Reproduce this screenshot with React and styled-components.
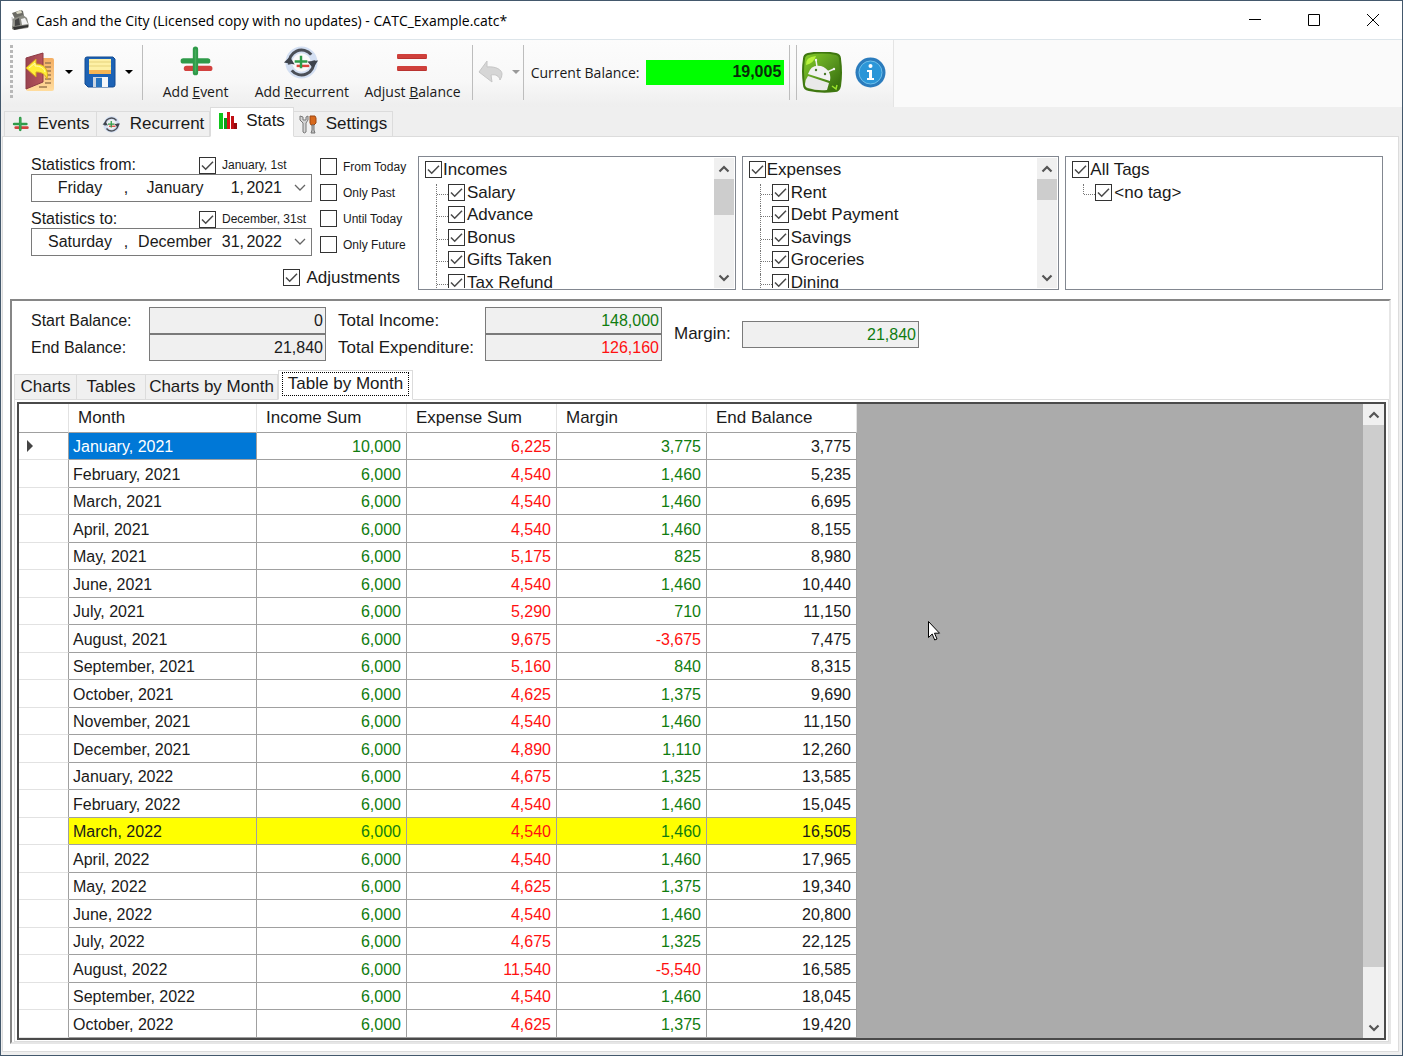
import React, { useState } from "react";
import styled, { createGlobalStyle } from "styled-components";

const GlobalStyle = createGlobalStyle`
  * {
    box-sizing: border-box;
  }
  body {
    margin: 0;
    font-family: "Liberation Sans", Arial, sans-serif;
    font-size: 16px;
    color: #1a1a1a;
    background: #fff;
  }
  button, input {
    font: inherit;
    color: inherit;
  }
  button {
    padding: 0;
    border: 0;
    background: none;
  }
`;

const Window = styled.div`
  display: flex;
  flex-direction: column;
  height: 100vh;
  overflow: hidden;
  border: 1px solid #43586c;
  background: #efefef;
`;

/* title bar */
const TitleBar = styled.header`
  display: flex;
  align-items: center;
  height: 38px;
  padding-left: 9px;
  background: #fff;
`;
const Title = styled.h1`
  flex: 1;
  margin: 0 0 0 6px;
  font-family: "Open Sans", "Noto Sans", sans-serif;
  font-size: 14px;
  font-weight: 400;
  color: #000;
`;
const WindowButton = styled.button`
  display: flex;
  align-items: center;
  justify-content: center;
  width: 59px;
  height: 38px;
`;

/* toolbar */
const ToolbarRow = styled.div`
  display: flex;
  height: 68px;
  border-top: 1px solid #dde5ea;
  background: #fafafa;
`;
const Toolbar = styled.div`
  display: flex;
  align-items: center;
  height: 67px;
  width: 893px;
  padding: 0 0 3px 9px;
  background: linear-gradient(#fcfcfc, #f8f8f8 60%, #eee);
  border-right: 1px solid #e4e4e4;
  font-family: "Open Sans", "Noto Sans", sans-serif;
  font-size: 14px;
`;
const Grip = styled.div`
  width: 3px;
  height: 54px;
  margin-right: 12px;
  background: repeating-linear-gradient(#b8b8b8 0 3px, transparent 3px 5px);
`;
const Separator = styled.div`
  width: 1px;
  height: 55px;
  background: #bdbdbd;
`;
const IconButton = styled.button`
  display: flex;
  align-items: center;
  justify-content: center;
  width: ${(props) => props.$width}px;
  height: 54px;
`;
const Caret = styled.span`
  border: 4px solid transparent;
  border-top-color: ${(props) => props.$color || "#000"};
  border-bottom-width: 0;
`;
const ToolButton = styled.button`
  display: flex;
  flex-direction: column;
  align-items: center;
  width: ${(props) => props.$width}px;
  padding-top: 4px;
  white-space: nowrap;
`;
const ToolIcon = styled.span`
  display: flex;
  align-items: center;
  justify-content: center;
  height: 36px;
`;
const ToolLabel = styled.span`
  line-height: 24px;
`;
const BalanceLabel = styled.label`
  width: 123px;
  padding-left: 7px;
  white-space: nowrap;
`;
const BalanceInput = styled.input`
  width: 138px;
  height: 25px;
  margin-right: 5px;
  padding: 0 3px;
  border: 0;
  background: #00ff00;
  color: #0a2a0a;
  font-family: "Liberation Sans", Arial, sans-serif;
  font-size: 16px;
  font-weight: 700;
  text-align: right;
`;

/* tabs */
const TabBar = styled.div`
  display: flex;
  align-items: flex-end;
  height: ${(props) => props.$height}px;
  padding-left: ${(props) => props.$indent}px;
  flex: none;
`;
const Tab = styled.button`
  display: flex;
  align-items: center;
  justify-content: center;
  gap: 9px;
  width: ${(props) => props.$width}px;
  height: ${(props) => (props.$active ? 30 : 26)}px;
  padding-bottom: ${(props) => (props.$active ? 2 : 0)}px;
  margin-bottom: -1px;
  border: 1px solid #dcdcdc;
  border-left-width: ${(props) => (props.$first || props.$active ? 1 : 0)}px;
  border-bottom-color: ${(props) => (props.$active ? "#fff" : "#dcdcdc")};
  background: ${(props) => (props.$active ? "#fff" : "#f0f0f0")};
  position: relative;
  font-size: 17px;
  white-space: nowrap;
`;
const FocusRing = styled.span`
  padding: 1px 5px;
  outline: 1px dotted #000;
  line-height: 20px;
`;

const Page = styled.main`
  flex: 1;
  display: flex;
  flex-direction: column;
  min-height: 0;
  margin: 0 3px 3px 1px;
  border: 1px solid #dcdcdc;
  background: #fff;
`;

/* filters */
const Filters = styled.section`
  display: flex;
  padding: 19px 15px 9px 28px;
  flex: none;
`;
const FilterColumn = styled.div`
  width: 387px;
`;
const DateRows = styled.div`
  display: flex;
  gap: 8px;
`;
const DateColumn = styled.div`
  width: 281px;
`;
const DateHeader = styled.div`
  display: flex;
  align-items: center;
  height: 18px;
  margin-top: ${(props) => (props.$spaced ? 8 : 0)}px;
`;
const DateTitle = styled.span`
  width: 168px;
`;
const CheckLabel = styled.label`
  display: flex;
  align-items: center;
  gap: ${(props) => props.$gap || 6}px;
  font-size: ${(props) => (props.$small ? 12 : 17)}px;
  height: 17px;
  white-space: nowrap;
`;
const CheckInput = styled.input.attrs({ type: "checkbox" })`
  appearance: none;
  flex: none;
  width: 17px;
  height: 17px;
  margin: 0;
  border: 1px solid #333;
  background: #fff;
  &:checked {
    background: #fff
      url("data:image/svg+xml,%3Csvg xmlns='http://www.w3.org/2000/svg' viewBox='0 0 15 15'%3E%3Cpath d='M2 7.5l3.7 3.7 7.3-7.4' fill='none' stroke='%23484848' stroke-width='1.5'/%3E%3C/svg%3E");
  }
`;
const DateBox = styled.button`
  display: grid;
  grid-template-columns: 80px 12px 86px 26px 38px 1fr;
  align-items: center;
  width: 100%;
  height: 28px;
  padding-left: 8px;
  border: 1px solid #7a7a7a;
  background: #fff;
  text-align: center;
  white-space: nowrap;
`;
const DatePart = styled.span`
  text-align: right;
`;
const ChevronCell = styled.span`
  display: flex;
  justify-content: flex-end;
  padding-right: 5px;
`;
const AdjustmentsRow = styled.div`
  display: flex;
  justify-content: flex-end;
  width: 369px;
  margin-top: 13px;
`;
const QuickColumn = styled.div`
  display: flex;
  flex-direction: column;
  gap: 9px;
  padding-top: 2px;
`;
const TreeGrid = styled.div`
  flex: 1;
  display: grid;
  grid-template-columns: repeat(3, 1fr);
  gap: 6px;
`;
const TreeBox = styled.div`
  display: flex;
  height: 134px;
  padding: 1px;
  border: 1px solid #828790;
  background: #fff;
`;
const TreeBody = styled.div`
  flex: 1;
  padding: 3px 0 0 5px;
  overflow: hidden;
`;
const TreeList = styled.ul`
  margin: 6px 0 0 11px;
  padding: 0;
  list-style: none;
`;
const TreeNode = styled.li`
  display: flex;
  align-items: flex-start;
  height: 22px;
  border-left: 1px dotted #777;
  &:nth-child(even) {
    height: 23px;
  }
  &:last-child {
    height: ${(props) => (props.$open ? 22 : 10)}px;
  }
  &::before {
    content: "";
    width: 11px;
    height: 10px;
    border-bottom: 1px dotted #777;
  }
`;

/* scrollbars */
const ScrollTrack = styled.div`
  display: flex;
  flex-direction: column;
  width: ${(props) => props.$width || 20}px;
  background: #f0f0f0;
`;
const ScrollButton = styled.button`
  display: flex;
  align-items: center;
  justify-content: center;
  height: 21px;
  flex: none;
`;
const ScrollThumb = styled.div`
  flex: ${(props) => props.$size} 0 0px;
  background: #cdcdcd;
`;
const ScrollRest = styled.div`
  flex: ${(props) => props.$size} 0 0px;
`;

/* lower panel */
const Report = styled.section`
  flex: 1;
  display: flex;
  flex-direction: column;
  min-height: 0;
  margin: 0 7px 7px 7px;
  border: 2px solid #e6e6e6;
  border-top-color: #868686;
  border-left-color: #868686;
`;
const Summary = styled.div`
  display: grid;
  grid-template-columns: 118px 177px 159px 177px 80px 177px;
  grid-template-rows: 27px 27px;
  align-items: center;
  padding: 6px 0 0 19px;
`;
const SummaryLabel = styled.label`
  grid-column: ${(props) => props.$col};
  grid-row: ${(props) => props.$row};
  padding-left: ${(props) => (props.$col > 1 ? 12 : 0)}px;
  font-size: ${(props) => (props.$col > 1 ? 17 : 16)}px;
`;
const SummaryInput = styled.input`
  grid-column: ${(props) => props.$col};
  grid-row: ${(props) => props.$row};
  width: 177px;
  height: 27px;
  padding: 1px 2px 0;
  border: 1px solid #7a7a7a;
  border-radius: 0;
  background: #f0f0f0;
  color: ${(props) => props.$color || "#1a1a1a"};
  text-align: right;
`;
const TabPanel = styled.div`
  flex: 1;
  display: flex;
  min-height: 0;
  margin-left: 2px;
  padding: 2px 2px 1px;
  border: 1px solid #dcdcdc;
`;
const GridFrame = styled.div`
  flex: 1;
  display: flex;
  min-width: 0;
  border: 2px solid #4a4a4a;
`;
const GridArea = styled.div`
  position: relative;
  flex: 1;
  overflow: hidden;
  background: #ababab;
`;
const Pointer = styled.svg`
  position: absolute;
  left: 909px;
  top: 217px;
`;
const Table = styled.table`
  table-layout: fixed;
  width: 838px;
  border-collapse: separate;
  border-spacing: 0;
  background: #fff;
`;
const Col = styled.col`
  width: ${(props) => props.$width}px;
`;
const HeadCell = styled.th`
  height: 29px;
  padding: 0 9px;
  border-right: 1px solid #e2e2e2;
  border-bottom: 1px solid #a0a0a0;
  font-size: 17px;
  font-weight: 400;
  text-align: left;
`;
const Row = styled.tr`
  height: 27px;
  background: ${(props) => (props.$current ? "#ffff00" : "#fff")};
  &:nth-child(even) {
    height: 28px;
  }
`;
const RowHeader = styled.td`
  padding: 0 0 0 8px;
  border-right: 1px solid #a0a0a0;
  border-bottom: 1px solid #e2e2e2;
  background: #fff;
`;
const Marker = styled.span`
  display: block;
  width: 0;
  border: 6px solid transparent;
  border-left-color: #444;
  border-right-width: 0;
`;
const Cell = styled.td`
  padding: 2px 5px 0 4px;
  border-right: 1px solid #a0a0a0;
  border-bottom: 1px solid #a0a0a0;
  background: ${(props) => (props.$selected ? "#0078d7" : "transparent")};
  color: ${(props) => props.$color || "#1a1a1a"};
  text-align: ${(props) => (props.$number ? "right" : "left")};
`;

const GREEN = "#107c10";
const RED = "#ff1010";

const months = [
  ["January, 2021", "10,000", "6,225", "3,775", "3,775"],
  ["February, 2021", "6,000", "4,540", "1,460", "5,235"],
  ["March, 2021", "6,000", "4,540", "1,460", "6,695"],
  ["April, 2021", "6,000", "4,540", "1,460", "8,155"],
  ["May, 2021", "6,000", "5,175", "825", "8,980"],
  ["June, 2021", "6,000", "4,540", "1,460", "10,440"],
  ["July, 2021", "6,000", "5,290", "710", "11,150"],
  ["August, 2021", "6,000", "9,675", "-3,675", "7,475"],
  ["September, 2021", "6,000", "5,160", "840", "8,315"],
  ["October, 2021", "6,000", "4,625", "1,375", "9,690"],
  ["November, 2021", "6,000", "4,540", "1,460", "11,150"],
  ["December, 2021", "6,000", "4,890", "1,110", "12,260"],
  ["January, 2022", "6,000", "4,675", "1,325", "13,585"],
  ["February, 2022", "6,000", "4,540", "1,460", "15,045"],
  ["March, 2022", "6,000", "4,540", "1,460", "16,505"],
  ["April, 2022", "6,000", "4,540", "1,460", "17,965"],
  ["May, 2022", "6,000", "4,625", "1,375", "19,340"],
  ["June, 2022", "6,000", "4,540", "1,460", "20,800"],
  ["July, 2022", "6,000", "4,675", "1,325", "22,125"],
  ["August, 2022", "6,000", "11,540", "-5,540", "16,585"],
  ["September, 2022", "6,000", "4,540", "1,460", "18,045"],
  ["October, 2022", "6,000", "4,625", "1,375", "19,420"],
];

function RegisterIcon() {
  return (
    <svg width="20" height="20" viewBox="0 0 20 20">
      <path d="M2 3l9-3 2 1 1 5-9 3z" fill="#6b6b64" />
      <path d="M6 2l5-2 1 3-5 1z" fill="#d9d7c4" />
      <path d="M2 9l11-4 4 3 2 8-1 2-14 2-2-1z" fill="#8b8b83" />
      <path d="M5 10l4-2 1 7-5 1z" fill="#454545" />
      <path d="M11 9l4-1 3 6-6 1z" fill="#f2f2f2" />
      <path d="M3 17l15-2v2L4 20z" fill="#333" />
      <path d="M2 7l1 9" stroke="#bdbdbd" />
    </svg>
  );
}

function ExitIcon() {
  return (
    <svg width="30" height="40" viewBox="0 0 30 40">
      <defs>
        <linearGradient id="sheet" x2="0" y2="1">
          <stop stopColor="#f4ae62" />
          <stop offset="1" stopColor="#ffdc9e" />
        </linearGradient>
        <linearGradient id="door">
          <stop stopColor="#9a4350" />
          <stop offset="1" stopColor="#b8555c" />
        </linearGradient>
      </defs>
      <path d="M3 6h24q2 0 2 2v29q0 2-2 2H3q-2 0-2-2z" fill="url(#sheet)" />
      <path
        d="M20 11h6M20 15h6M20 19h6M20 23h6M20 27h6M20 31h6M14 35h8"
        stroke="#9d7950"
        strokeWidth="1.3"
      />
      <path d="M1 6L18 1v29L1 37z" fill="url(#door)" stroke="#8c3a45" />
      <path
        d="M1 16l10-9v5c8 0 13 5 11 15-2-5-5-7-11-7v5z"
        fill="#ffee38"
        stroke="#d8a820"
      />
      <path d="M4 16l6-5v3c5 0 9 2 10 6" fill="none" stroke="#fffbb0" />
    </svg>
  );
}

function SaveIcon() {
  return (
    <svg width="32" height="32" viewBox="0 0 32 32">
      <path
        d="M3 1h26l2 2v26q0 2-2 2H4l-3-3V3q0-2 2-2z"
        fill="#1c62b5"
        stroke="#124a90"
      />
      <path d="M5 3h22v15H5z" fill="#fdf0a6" />
      <path d="M5 14h22v4H5z" fill="#f7b552" />
      <path d="M5 6h22M5 10h22" stroke="#e6d37c" />
      <path d="M9 21h15v10H9z" fill="#c9d5e2" />
      <path d="M12 22h6v9h-6z" fill="#2773bd" />
      <path d="M18 21h6v10h-6z" fill="#f4f6f9" />
    </svg>
  );
}

function PlusIcon({ size }) {
  return (
    <svg width={size} height={size} viewBox="0 0 32 32">
      <path d="M7 22h22" stroke="#d2423f" strokeWidth="5" strokeLinecap="round" />
      <path
        d="M4 15h23M15.500 4v22"
        stroke="#2f9a49"
        strokeWidth="5"
        strokeLinecap="round"
      />
      <path d="M15.500 4v22" stroke="#46ad5b" strokeWidth="1.500" />
    </svg>
  );
}

function RecurrentIcon({ size }) {
  return (
    <svg width={size} height={size} viewBox="0 0 38 34">
      <circle cx="19" cy="17" r="13" fill="none" stroke="#d3dff2" strokeWidth="7" />
      <path
        d="M6.500 19A12.700 12.700 0 0 1 29 9M31.500 15A12.700 12.700 0 0 1 9 25"
        fill="none"
        stroke="#4b4f57"
        strokeWidth="3"
      />
      <path d="M1 17l6-6 5 8zM25 16l11-1-5 8z" fill="#3e434c" />
      <path d="M14 20.500h13" stroke="#d9443c" strokeWidth="2.500" />
      <path d="M12 16h13M18.500 10v13" stroke="#2e9b48" strokeWidth="2.500" />
    </svg>
  );
}

function BarsIcon() {
  return (
    <svg width="30" height="19" viewBox="0 0 30 19">
      <rect y="1" width="30" height="5" rx="1" fill="#cf403b" />
      <rect y="13" width="30" height="5" rx="1" fill="#cf403b" />
      <path d="M1 5.500h28M1 17.500h28" stroke="#b93330" />
    </svg>
  );
}

function UndoIcon() {
  return (
    <svg width="26" height="24" viewBox="0 0 26 24">
      <path
        d="M1 12L9 1v6c9-1 15 3 15 7q0 3-2 6c-1-4-4-6-9-5l1 7z"
        fill="#d6d6d6"
        stroke="#c6c6c6"
      />
    </svg>
  );
}

function AndroidIcon() {
  return (
    <svg width="40" height="41" viewBox="0 0 40 41">
      <defs>
        <linearGradient id="droid" x2="1" y2="1">
          <stop stopColor="#86cf28" />
          <stop offset=".5" stopColor="#5c9a20" />
          <stop offset="1" stopColor="#2f6508" />
        </linearGradient>
      </defs>
      <path
        d="M6 2q14-3 28 0q4 1 4 5 2 14 0 27-1 5-5 5-13 2-26-1-5-1-5-5Q0 19 2 7q0-4 4-5z"
        fill="url(#droid)"
        stroke="#3f7710"
        strokeWidth="2"
      />
      <path d="M4 13Q3 5 14 4q-2 7-10 9z" fill="#b7f23c" />
      <path d="M14 8l1 7M32 17l-7 3" stroke="#f2f2f2" strokeWidth="1.500" />
      <circle cx="14" cy="8" r="1.200" fill="#f2f2f2" />
      <circle cx="32" cy="17" r="1.200" fill="#f2f2f2" />
      <path d="M6 22Q9 12 19 14q11 4 9 15z" fill="#f2f2f2" />
      <path d="M6 24l21 7-2 7q-10 1-19-2-3-1-3-4 0-4 3-8z" fill="#e9e9e9" />
      <circle cx="14" cy="18" r="1.200" fill="#4b7a2a" />
      <circle cx="23" cy="22" r="1.200" fill="#4b7a2a" />
      <path d="M30 34l4 3 1-4" fill="none" stroke="#9be32b" strokeWidth="1.500" />
    </svg>
  );
}

function InfoIcon() {
  return (
    <svg width="31" height="31" viewBox="0 0 31 31">
      <circle cx="15.500" cy="15.500" r="15" fill="#2b7cbd" />
      <circle cx="15.500" cy="15.500" r="11.500" fill="#2b96d8" stroke="#6fc0ea" />
      <circle cx="15.500" cy="9" r="2" fill="#fff" />
      <path d="M12 13h5v8h2v2h-7v-2h2v-6h-2z" fill="#fff" />
    </svg>
  );
}

function StatsIcon() {
  return (
    <svg width="18" height="18" viewBox="0 0 18 18">
      <path d="M0 1h4v16H0z" fill="#10c51c" />
      <path d="M5 6h3v11H5z" fill="#0a9a18" />
      <path d="M8 0h3v17H8z" fill="#d81418" />
      <path d="M12 4h3v13h-3z" fill="#c01014" />
      <path d="M15 11h3v6h-3z" fill="#960a0e" />
    </svg>
  );
}

function ToolsIcon() {
  return (
    <svg width="18" height="19" viewBox="0 0 18 19">
      <path
        d="M1 1v4l3 3v9q1 2 3 0V8l2-3V1L7 2v3H4V2z"
        fill="#d5d5d5"
        stroke="#777"
      />
      <path d="M11 1h5l1 2v5l-2 2h-3l-1-2z" fill="#d7691c" stroke="#9c4710" />
      <path d="M13 10h2v5l1 3h-4l1-3z" fill="#bbb" stroke="#777" />
    </svg>
  );
}

function ScrollArrow({ down }) {
  return (
    <svg width="12" height="8" viewBox="0 0 12 8">
      <path
        d={down ? "M1.500 1.500L6 6l4.500-4.500" : "M1.500 6.500L6 2l4.500 4.500"}
        fill="none"
        stroke="#555"
        strokeWidth="2.200"
      />
    </svg>
  );
}

function ScrollBar({ thumb, rest, width }) {
  return (
    <ScrollTrack $width={width}>
      <ScrollButton aria-label="Scroll up">
        <ScrollArrow />
      </ScrollButton>
      <ScrollThumb $size={thumb} />
      <ScrollRest $size={rest} />
      <ScrollButton aria-label="Scroll down">
        <ScrollArrow down />
      </ScrollButton>
    </ScrollTrack>
  );
}

function Check({ label, small, gap, on }) {
  const [checked, setChecked] = useState(Boolean(on));
  return (
    <CheckLabel $small={small} $gap={gap}>
      <CheckInput
        checked={checked}
        onChange={(event) => setChecked(event.target.checked)}
      />
      {label}
    </CheckLabel>
  );
}

function DatePicker({ name, weekday, month, day, year }) {
  return (
    <DateBox aria-label={name}>
      <span>{weekday}</span>
      <span>,</span>
      <span>{month}</span>
      <DatePart>{day},</DatePart>
      <DatePart>{year}</DatePart>
      <ChevronCell>
        <svg width="12" height="8" viewBox="0 0 12 8">
          <path d="M1 1l5 5 5-5" fill="none" stroke="#666" strokeWidth="1.300" />
        </svg>
      </ChevronCell>
    </DateBox>
  );
}

function Tree({ root, items, open, children }) {
  return (
    <TreeBox>
      <TreeBody>
        <Check label={root} gap={1} on />
        <TreeList>
          {items.map((item) => (
            <TreeNode key={item} $open={open}>
              <Check label={item} gap={2} on />
            </TreeNode>
          ))}
        </TreeList>
      </TreeBody>
      {children}
    </TreeBox>
  );
}

function MonthTable() {
  return (
    <Table>
      <colgroup>
        <Col $width={50} />
        <Col $width={188} />
        <Col $width={150} />
        <Col $width={150} />
        <Col $width={150} />
        <Col $width={150} />
      </colgroup>
      <thead>
        <tr>
          <HeadCell />
          <HeadCell>Month</HeadCell>
          <HeadCell>Income Sum</HeadCell>
          <HeadCell>Expense Sum</HeadCell>
          <HeadCell>Margin</HeadCell>
          <HeadCell>End Balance</HeadCell>
        </tr>
      </thead>
      <tbody>
        {months.map(([month, income, expense, margin, balance], index) => (
          <Row key={month} $current={month === "March, 2022"}>
            <RowHeader>{index === 0 && <Marker />}</RowHeader>
            <Cell $selected={index === 0} $color={index === 0 ? "#fff" : ""}>
              {month}
            </Cell>
            <Cell $number $color={GREEN}>
              {income}
            </Cell>
            <Cell $number $color={RED}>
              {expense}
            </Cell>
            <Cell $number $color={margin.startsWith("-") ? RED : GREEN}>
              {margin}
            </Cell>
            <Cell $number>{balance}</Cell>
          </Row>
        ))}
      </tbody>
    </Table>
  );
}

function App() {
  return (
    <Window>
      <GlobalStyle />
      <TitleBar>
        <RegisterIcon />
        <Title>
          Cash and the City (Licensed copy with no updates) - CATC_Example.catc*
        </Title>
        <WindowButton aria-label="Minimize">
          <svg width="12" height="12" viewBox="0 0 12 12">
            <path d="M0 5.500h12" stroke="#000" />
          </svg>
        </WindowButton>
        <WindowButton aria-label="Maximize">
          <svg width="12" height="12" viewBox="0 0 12 12">
            <path d="M.5.500h11v11H.5z" fill="none" stroke="#000" />
          </svg>
        </WindowButton>
        <WindowButton aria-label="Close">
          <svg width="12" height="12" viewBox="0 0 12 12">
            <path d="M0 0l12 12M12 0L0 12" stroke="#000" />
          </svg>
        </WindowButton>
      </TitleBar>

      <ToolbarRow>
        <Toolbar>
          <Grip />
          <IconButton $width={30} aria-label="Exit">
            <ExitIcon />
          </IconButton>
          <IconButton $width={29} aria-label="File menu">
            <Caret />
          </IconButton>
          <IconButton $width={32} aria-label="Save">
            <SaveIcon />
          </IconButton>
          <IconButton $width={26} aria-label="Save menu">
            <Caret />
          </IconButton>
          <Separator />
          <ToolButton $width={106}>
            <ToolIcon>
              <PlusIcon size={34} />
            </ToolIcon>
            <ToolLabel>
              Add <u>E</u>vent
            </ToolLabel>
          </ToolButton>
          <ToolButton $width={107}>
            <ToolIcon>
              <RecurrentIcon size={37} />
            </ToolIcon>
            <ToolLabel>
              Add <u>R</u>ecurrent
            </ToolLabel>
          </ToolButton>
          <ToolButton $width={115}>
            <ToolIcon>
              <BarsIcon />
            </ToolIcon>
            <ToolLabel>
              Adjust <u>B</u>alance
            </ToolLabel>
          </ToolButton>
          <IconButton $width={2} aria-hidden="true" />
          <Separator />
          <IconButton $width={36} aria-label="Undo">
            <UndoIcon />
          </IconButton>
          <IconButton $width={14} aria-label="Undo menu">
            <Caret $color="#999" />
          </IconButton>
          <Separator />
          <BalanceLabel htmlFor="current">Current Balance:</BalanceLabel>
          <BalanceInput id="current" value="19,005" readOnly />
          <Separator />
          <IconButton $width={6} aria-label="More" />
          <Separator />
          <IconButton $width={50} aria-label="Android version">
            <AndroidIcon />
          </IconButton>
          <IconButton $width={46} aria-label="About">
            <InfoIcon />
          </IconButton>
        </Toolbar>
      </ToolbarRow>

      <TabBar $height={29} $indent={3}>
        <Tab $width={93} $first>
          <PlusIcon size={17} />
          <span>Events</span>
        </Tab>
        <Tab $width={113}>
          <RecurrentIcon size={19} />
          <span>Recurrent</span>
        </Tab>
        <Tab $width={84} $active>
          <StatsIcon />
          <span>Stats</span>
        </Tab>
        <Tab $width={99}>
          <ToolsIcon />
          <span>Settings</span>
        </Tab>
      </TabBar>

      <Page>
        <Filters>
          <FilterColumn>
            <DateRows>
              <DateColumn>
                <DateHeader>
                  <DateTitle>Statistics from:</DateTitle>
                  <Check label="January, 1st" small on />
                </DateHeader>
                <DatePicker
                  name="Statistics from"
                  weekday="Friday"
                  month="January"
                  day="1"
                  year="2021"
                />
                <DateHeader $spaced>
                  <DateTitle>Statistics to:</DateTitle>
                  <Check label="December, 31st" small on />
                </DateHeader>
                <DatePicker
                  name="Statistics to"
                  weekday="Saturday"
                  month="December"
                  day="31"
                  year="2022"
                />
              </DateColumn>
              <QuickColumn>
                <Check label="From Today" small />
                <Check label="Only Past" small />
                <Check label="Until Today" small />
                <Check label="Only Future" small />
              </QuickColumn>
            </DateRows>
            <AdjustmentsRow>
              <Check label="Adjustments" on />
            </AdjustmentsRow>
          </FilterColumn>
          <TreeGrid>
            <Tree
              root="Incomes"
              items={["Salary", "Advance", "Bonus", "Gifts Taken", "Tax Refund"]}
              open
            >
              <ScrollBar thumb={36} rest={52} />
            </Tree>
            <Tree
              root="Expenses"
              items={["Rent", "Debt Payment", "Savings", "Groceries", "Dining"]}
              open
            >
              <ScrollBar thumb={21} rest={67} />
            </Tree>
            <Tree root="All Tags" items={["<no tag>"]} />
          </TreeGrid>
        </Filters>

        <Report>
          <Summary>
            <SummaryLabel htmlFor="start" $col={1} $row={1}>
              Start Balance:
            </SummaryLabel>
            <SummaryInput id="start" $col={2} $row={1} value="0" readOnly />
            <SummaryLabel htmlFor="end" $col={1} $row={2}>
              End Balance:
            </SummaryLabel>
            <SummaryInput id="end" $col={2} $row={2} value="21,840" readOnly />
            <SummaryLabel htmlFor="income" $col={3} $row={1}>
              Total Income:
            </SummaryLabel>
            <SummaryInput
              id="income"
              $col={4}
              $row={1}
              $color={GREEN}
              value="148,000"
              readOnly
            />
            <SummaryLabel htmlFor="spent" $col={3} $row={2}>
              Total Expenditure:
            </SummaryLabel>
            <SummaryInput
              id="spent"
              $col={4}
              $row={2}
              $color={RED}
              value="126,160"
              readOnly
            />
            <SummaryLabel htmlFor="margin" $col={5} $row="1 / 3">
              Margin:
            </SummaryLabel>
            <SummaryInput
              id="margin"
              $col={6}
              $row="1 / 3"
              $color={GREEN}
              value="21,840"
              readOnly
            />
          </Summary>

          <TabBar $height={38} $indent={2}>
            <Tab $width={63} $first>
              Charts
            </Tab>
            <Tab $width={69}>Tables</Tab>
            <Tab $width={132}>Charts by Month</Tab>
            <Tab $width={135} $active>
              <FocusRing>Table by Month</FocusRing>
            </Tab>
          </TabBar>
          <TabPanel>
            <GridFrame>
              <GridArea>
                <MonthTable />
                <Pointer width="13" height="20" viewBox="0 0 13 20">
                  <path
                    d="M.5.500v16l3.700-3.500 2.500 6 2.300-1-2.500-5.800h5z"
                    fill="#fff"
                    stroke="#000"
                  />
                </Pointer>
              </GridArea>
              <ScrollBar thumb={542} rest={50} width={21} />
            </GridFrame>
          </TabPanel>
        </Report>
      </Page>
    </Window>
  );
}

export default App;
